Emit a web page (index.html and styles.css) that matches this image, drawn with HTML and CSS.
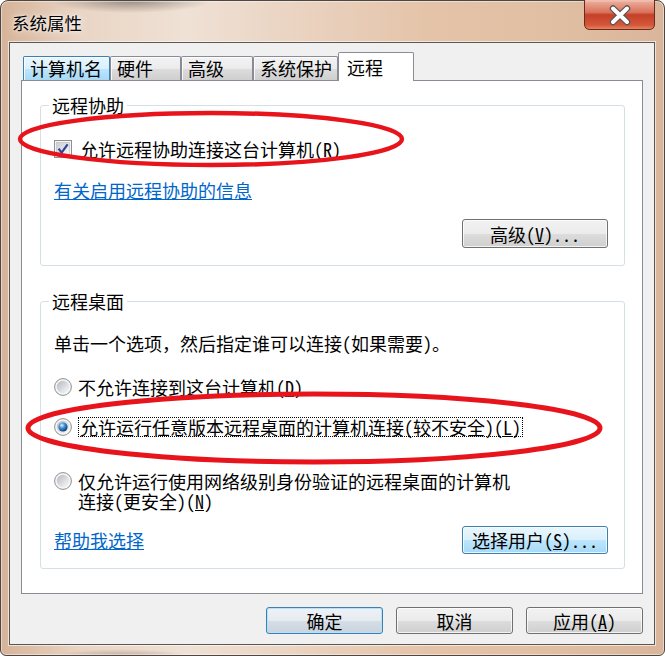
FILE: index.html
```html
<!DOCTYPE html>
<html lang="zh-CN">
<head>
<meta charset="utf-8">
<title>系统属性</title>
<link rel="stylesheet" href="styles.css">
</head>
<body>
<div class="window">
  <div class="titlebar">
    <span class="title">系统属性</span>
    <button class="close" aria-label="关闭">
      <svg width="71" height="30" viewBox="0 0 71 30">
        <defs>
          <linearGradient id="cg" x1="0" y1="0" x2="0" y2="1">
            <stop offset="0" stop-color="#eeb3a2"/>
            <stop offset="0.42" stop-color="#d9725a"/>
            <stop offset="0.5" stop-color="#c4402a"/>
            <stop offset="0.85" stop-color="#d5573a"/>
            <stop offset="1" stop-color="#e98a64"/>
          </linearGradient>
        </defs>
        <path d="M0.5 0 V24 Q0.5 29.5 6 29.5 H65 Q70.5 29.5 70.5 24 V0" fill="url(#cg)" stroke="#6b2a1f"/>
        <path d="M1.5 1 H69.5" stroke="rgba(255,255,255,.35)"/>
        <path d="M29 8.5 L43 22 M43 8.5 L29 22" stroke="#5b5456" stroke-width="6.5" stroke-linecap="round"/>
        <path d="M29 8.5 L43 22 M43 8.5 L29 22" stroke="#ffffff" stroke-width="4" stroke-linecap="round"/>
      </svg>
    </button>
  </div>

  <div class="client">
    <div class="tabs">
      <div class="tab tab-name hover">计算机名</div>
      <div class="tab tab-hw">硬件</div>
      <div class="tab tab-adv">高级</div>
      <div class="tab tab-prot">系统保护</div>
      <div class="tab tab-remote active">远程</div>
    </div>

    <div class="panel">
      <fieldset class="group group-assist">
        <legend>远程协助</legend>
        <label class="opt-row check-row">
          <svg class="checkbox" width="18" height="18" viewBox="0 0 18 18">
            <defs>
              <linearGradient id="cbg" x1="0" y1="0" x2="1" y2="1">
                <stop offset="0" stop-color="#c9cdd3"/>
                <stop offset="1" stop-color="#f8f8f8"/>
              </linearGradient>
            </defs>
            <rect x="0.5" y="0.5" width="17" height="17" fill="#f6f6f6" stroke="#8e8f8f"/>
            <rect x="2.5" y="2.5" width="13" height="13" fill="url(#cbg)" stroke="#b8bcc2" stroke-width="0.6"/>
            <path d="M4.6 8.6 L7.6 12.6 L13.6 4.4" fill="none" stroke="#31449b" stroke-width="2.2"/>
          </svg>
          <span class="opt-text">允许远程协助连接这台计算机(<u>R</u>)</span>
        </label>
        <a class="link link-info" href="#">有关启用远程协助的信息</a>
        <div class="group-actions">
          <button class="btn btn-wide">高级(<u>V</u>)...</button>
        </div>
      </fieldset>

      <fieldset class="group group-desktop">
        <legend>远程桌面</legend>
        <p class="desc">单击一个选项，然后指定谁可以连接(如果需要)。</p>

        <label class="opt-row radio-row r1">
          <svg class="radio" width="18" height="18" viewBox="0 0 18 18">
            <defs>
              <linearGradient id="rg" x1="0" y1="0" x2="1" y2="1">
                <stop offset="0" stop-color="#b4b9bf"/>
                <stop offset="1" stop-color="#fbfbfb"/>
              </linearGradient>
            </defs>
            <circle cx="9" cy="9" r="8.4" fill="#f5f5f5" stroke="#8e8f8f"/>
            <circle cx="9" cy="9" r="6.2" fill="url(#rg)"/>
          </svg>
          <span class="opt-text">不允许连接到这台计算机(<u>D</u>)</span>
        </label>

        <label class="opt-row radio-row r2">
          <svg class="radio" width="18" height="18" viewBox="0 0 18 18">
            <defs>
              <radialGradient id="rdot" cx="0.38" cy="0.32" r="0.75">
                <stop offset="0" stop-color="#e8f4ff"/>
                <stop offset="0.35" stop-color="#4f9be0"/>
                <stop offset="0.8" stop-color="#14508f"/>
                <stop offset="1" stop-color="#0b335e"/>
              </radialGradient>
            </defs>
            <circle cx="9" cy="9" r="8.4" fill="#f5f5f5" stroke="#8e8f8f"/>
            <circle cx="9" cy="9" r="6.2" fill="url(#rg)"/>
            <circle cx="9" cy="9" r="4.6" fill="url(#rdot)"/>
          </svg>
          <span class="opt-text focus">允许运行任意版本远程桌面的计算机连接(较不安全)(<u>L</u>)</span>
        </label>

        <label class="opt-row radio-row r3">
          <svg class="radio" width="18" height="18" viewBox="0 0 18 18">
            <circle cx="9" cy="9" r="8.4" fill="#f5f5f5" stroke="#8e8f8f"/>
            <circle cx="9" cy="9" r="6.2" fill="url(#rg)"/>
          </svg>
          <span class="opt-text">仅允许运行使用网络级别身份验证的远程桌面的计算机<br>连接(更安全)(<u>N</u>)</span>
        </label>

        <div class="group-actions split">
          <a class="link" href="#">帮助我选择</a>
          <button class="btn btn-wide btn-hover">选择用户(<u>S</u>)...</button>
        </div>
      </fieldset>
    </div>

    <div class="footer">
      <button class="btn btn-dlg btn-default">确定</button>
      <button class="btn btn-dlg">取消</button>
      <button class="btn btn-dlg">应用(<u>A</u>)</button>
    </div>
  </div>

  <svg class="annotations" width="665" height="656" viewBox="0 0 665 656">
    <ellipse cx="211" cy="139" rx="191" ry="26" fill="none" stroke="#e8141c" stroke-width="4.5"/>
    <ellipse cx="314" cy="428" rx="286" ry="34" fill="none" stroke="#e8141c" stroke-width="5"/>
  </svg>
</div>
</body>
</html>
```
FILE: styles.css
```css
* { box-sizing: border-box; }

html, body {
  margin: 0;
  padding: 0;
}

body {
  width: 665px;
  height: 656px;
  overflow: hidden;
  background: #ffffff;
  font-family: "Noto Sans Mono CJK SC", "Noto Sans CJK SC", sans-serif;
  font-size: 18px;
  color: #000;
}

.window {
  position: relative;
  width: 665px;
  height: 656px;
  border: 1px solid #4d4642;
  border-radius: 8px 8px 6px 6px;
  padding: 0 9px 10px 8px;
  display: flex;
  flex-direction: column;
  background:
    radial-gradient(ellipse 80px 12px at 130px 0px, rgba(90, 78, 70, 0.55), rgba(90, 78, 70, 0)),
    radial-gradient(ellipse 70px 8px at 120px 656px, rgba(110, 92, 80, 0.45), rgba(110, 92, 80, 0)),
    linear-gradient(90deg, #d6b398 0%, #e9d5c5 12%, #efe1d5 28%, #ead3c1 45%, #e4c3a8 65%, #e1bfa3 82%, #d9b69b 100%);
  box-shadow: inset 0 0 0 1px rgba(255, 255, 255, 0.45);
}

.titlebar {
  height: 41px;
  display: flex;
  align-items: flex-start;
  flex-shrink: 0;
}

.title {
  padding: 12px 0 0 3px;
  font-family: "Noto Sans CJK SC", sans-serif;
  font-size: 17.5px;
  line-height: 20px;
  color: #000;
  text-shadow: 0 0 8px rgba(255, 255, 255, 0.9), 0 0 3px rgba(255, 255, 255, 0.9);
}

.close {
  margin-left: auto;
  margin-top: -1px;
  width: 71px;
  height: 30px;
  padding: 0;
  border: 0;
  background: none;
  display: block;
}
.close svg { display: block; }

.client {
  flex: 1;
  border: 1px solid #5d5753;
  background: #f0f0f0;
  padding: 9px 11px 10px 11px;
  display: flex;
  flex-direction: column;
  box-shadow: 0 0 0 1px rgba(255, 255, 255, 0.6);
}

/* tabs */
.tabs {
  height: 28px;
  display: flex;
  align-items: flex-end;
  padding-left: 2px;
  flex-shrink: 0;
}

.tab {
  height: 24px;
  border: 1px solid #898c95;
  border-bottom: 0;
  border-radius: 2px 2px 0 0;
  padding: 0 0 0 6px;
  line-height: 22px;
  white-space: nowrap;
  background: linear-gradient(#f3f3f3 0%, #ebebeb 50%, #dddddd 50%, #cfcfcf 100%);
  box-shadow: inset 1px 1px 0 rgba(255, 255, 255, 0.8);
}

.tab-name { width: 87px; }
.tab-hw { width: 71px; }
.tab-adv { width: 72px; }
.tab-prot { width: 85px; }
.tab-remote { width: 76px; }

.tab.hover {
  border-color: #3c7fb1;
  background: linear-gradient(#eaf6fd 0%, #d9f0fc 50%, #bee6fd 50%, #a7d9f5 100%);
}

.tab.active {
  position: relative;
  z-index: 1;
  height: 29px;
  margin-bottom: -1px;
  padding: 3px 0 0 8px;
  background: #ffffff;
  box-shadow: none;
}

/* panel */
.panel {
  height: 514px;
  flex-shrink: 0;
  border: 1px solid #898c95;
  background: #ffffff;
  padding: 14px 17px 0 18px;
}

.group {
  margin: 0;
  min-width: 0;
  border: 1px solid #d5dfe5;
  border-radius: 3px;
  padding: 0 16px 17px 13px;
}

.group legend {
  padding: 0 3px;
  margin-left: -5px;
  line-height: 20px;
}

.group-desktop {
  margin-top: 25px;
  padding-bottom: 14px;
}

.opt-row {
  display: flex;
  align-items: center;
  line-height: 20px;
  white-space: nowrap;
}

.checkbox, .radio {
  flex-shrink: 0;
  display: block;
}

.check-row { margin-top: 24px; }
.check-row .opt-text { margin-left: 8px; }

.radio-row .opt-text { margin-left: 6px; }
.r1 { margin-top: 24px; }
.r2 { margin-top: 20px; }
.r3 { margin-top: 34px; align-items: flex-start; }
.r3 .radio { margin-top: 1px; }

.focus {
  display: inline-block;
  padding: 0 2px;
  outline: 1px dotted #000;
  outline-offset: -1px;
}

.desc {
  margin: 22px 0 0 0;
  line-height: 20px;
  white-space: nowrap;
}

.link {
  color: #0066cc;
  text-decoration: underline;
  line-height: 20px;
}

.link-info {
  display: table;
  margin-top: 21px;
}

.group-actions {
  margin-top: 19px;
  display: flex;
  justify-content: flex-end;
  align-items: center;
}

.group-actions.split {
  margin-top: 15px;
  justify-content: space-between;
}

/* buttons */
.btn {
  font-family: inherit;
  font-size: 18px;
  color: #000;
  line-height: 20px;
  padding: 0;
  border: 1px solid #707070;
  border-radius: 3px;
  background: linear-gradient(#f2f2f2 0%, #ebebeb 50%, #dddddd 50%, #cfcfcf 100%);
  box-shadow: inset 0 0 0 1px rgba(255, 255, 255, 0.75);
  text-align: center;
  white-space: nowrap;
}

.btn-wide {
  width: 146px;
  height: 29px;
}

.group-actions.split .btn-wide { height: 28px; }

.btn-hover {
  border-color: #3c7fb1;
  background: linear-gradient(#eaf6fd 0%, #d9f0fc 50%, #bee6fd 50%, #a7d9f5 100%);
}

.footer {
  margin-top: 13px;
  display: flex;
  justify-content: flex-end;
  gap: 13px;
  flex-shrink: 0;
}

.btn-dlg {
  width: 117px;
  height: 27px;
}

.btn-default {
  border-color: #3c7fb1;
  background: linear-gradient(#eef2f6 0%, #e6ebf0 50%, #d6dee6 50%, #cad4de 100%);
  box-shadow: inset 0 0 0 1px #b5e2f8;
}

.annotations {
  position: absolute;
  top: -1px;
  left: -1px;
  pointer-events: none;
}
```
